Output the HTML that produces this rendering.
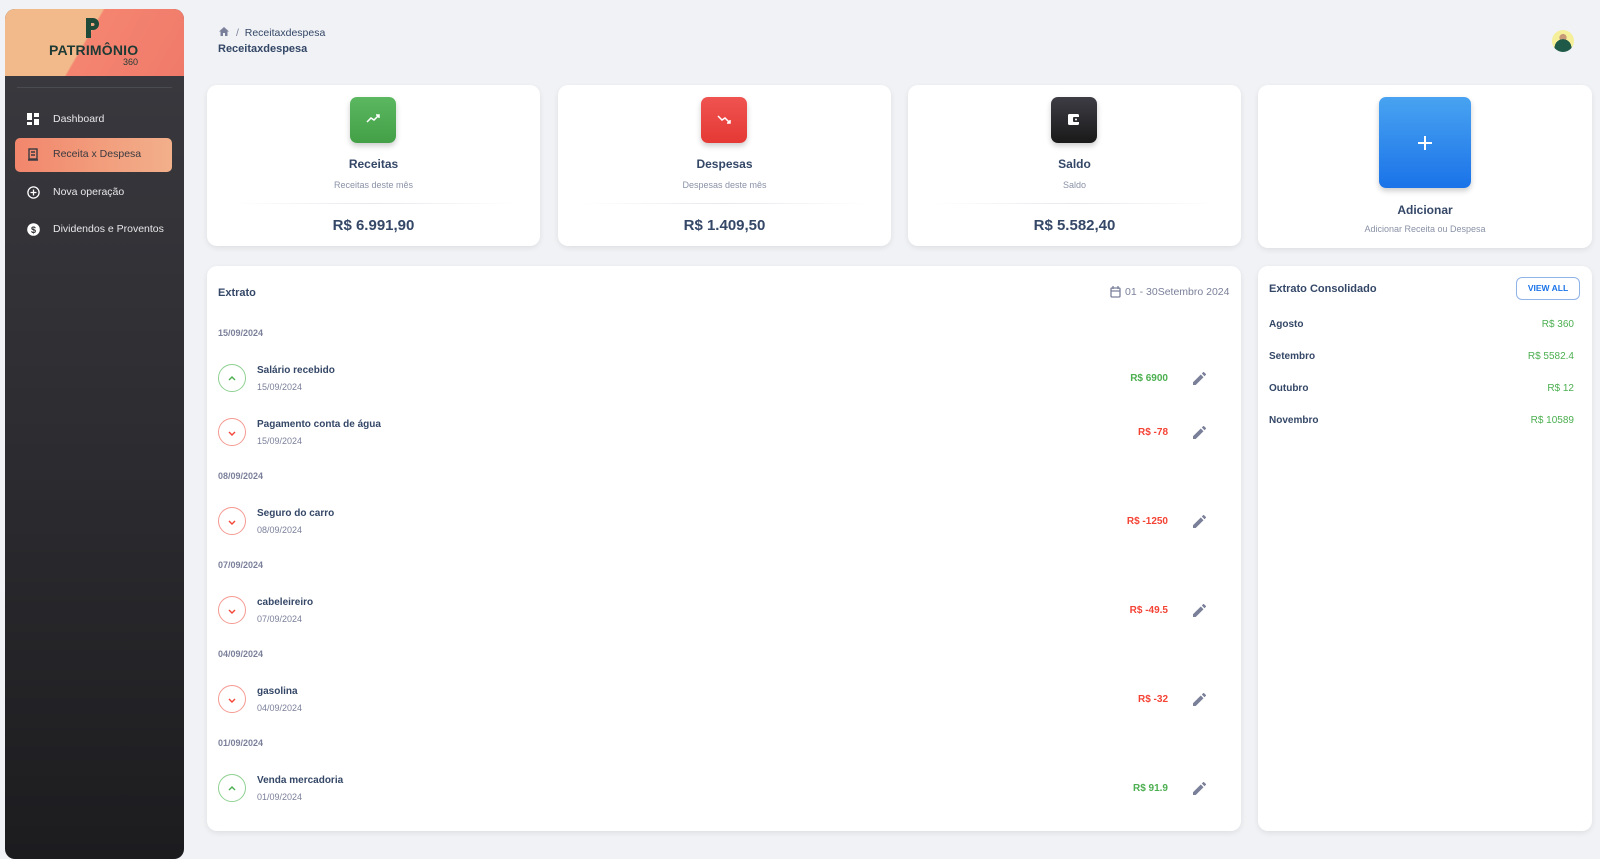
<!DOCTYPE html><html><head><meta charset="utf-8"><style>
*{box-sizing:border-box;margin:0;padding:0}
body{width:1600px;height:844px;background:#f0f2f5;font-family:"Liberation Sans",sans-serif;color:#344767;position:relative;overflow:hidden}
.a{position:absolute}
.side{left:5px;top:9px;width:179px;height:850px;border-radius:10px;background:linear-gradient(180deg,#3a3a40 0%,#2a2a2e 60%,#1c1c1f 100%);overflow:hidden}
.logo{left:0;top:0;width:179px;height:67px;background:linear-gradient(120deg,#f2b98a 0%,#f2b98a 45%,#f48470 46%,#f07a6a 100%)}
.nav{left:0;width:179px;height:34px;color:#e8e8ea;font-size:10.5px}
.nav span{position:absolute;left:48px;top:10px}
.nav svg{position:absolute;left:22px;top:10px}
.card{background:#fff;border-radius:10px;box-shadow:0 2px 6px rgba(0,0,0,.08)}
.ib{border-radius:7px;box-shadow:0 3px 6px rgba(0,0,0,.2)}
.ct{font-weight:bold;font-size:12px;text-align:center;width:100%}
.cs{font-size:9px;color:#8a92a6;text-align:center;width:100%}
.cv{font-weight:bold;font-size:15px;text-align:center;width:100%}
.hr{height:1px;background:linear-gradient(90deg,transparent,#e6e8ec,transparent)}
.dg{font-size:9px;font-weight:bold;color:#7b809a;left:11px}
.ci{width:28px;height:28px;border-radius:50%;left:11px;border:1px solid}
.rt{left:50px;font-weight:bold;font-size:10px}
.rd{left:50px;font-size:9px;color:#7b809a}
.amt{right:73px;font-weight:bold;font-size:10px;text-align:right}
.g{color:#4caf50}.r{color:#f44335}
.cg{border-color:#8fd092}.cr{border-color:#f59a92}
</style></head><body>
<div class="a side">
 <div class="a logo">
  <svg class="a" style="left:80px;top:9px" width="14" height="20" viewBox="0 0 14 20"><path d="M1 0h7a6 6 0 0 1 0 12H6v8H1z" fill="#1f4a3a"/><path d="M6 5h2a1.5 1.5 0 0 1 0 3H6z" fill="#f2a882"/></svg>
  <div class="a" style="left:44px;top:33px;font-weight:bold;font-size:14px;color:#1e3a34;letter-spacing:.2px">PATRIMÔNIO</div>
  <div class="a" style="left:118px;top:48px;font-size:9px;color:#1e3a34">360</div>
 </div>
 <div class="a" style="left:12px;top:78px;width:155px;height:1px;background:#4a4a52"></div>
 <div class="a nav" style="top:94px"><svg width="12" height="12" viewBox="0 0 12 12" fill="#fff"><rect x="0" y="0" width="5" height="7"/><rect x="7" y="0" width="5" height="4"/><rect x="0" y="9" width="5" height="3"/><rect x="7" y="6" width="5" height="6"/></svg><span>Dashboard</span></div>
 <div class="a nav" style="top:129px;left:10px;width:157px;border-radius:5px;background:linear-gradient(90deg,#f2866c,#f2b08a);color:#3a3a40"><svg style="left:12px" width="12" height="13" viewBox="0 0 12 13" fill="none" stroke="#3a3a40" stroke-width="1.4"><rect x="2" y="1" width="8" height="10"/><path d="M4 4h4M4 7h4M1 12h10"/></svg><span style="left:38px">Receita x Despesa</span></div>
 <div class="a nav" style="top:167px"><svg width="13" height="13" viewBox="0 0 13 13" fill="none" stroke="#fff" stroke-width="1.3"><circle cx="6.5" cy="6.5" r="5.6"/><path d="M6.5 3.5v6M3.5 6.5h6"/></svg><span>Nova operação</span></div>
 <div class="a nav" style="top:204px"><svg width="13" height="13" viewBox="0 0 13 13"><circle cx="6.5" cy="6.5" r="6.3" fill="#fff"/><text x="6.5" y="10" font-size="9" font-weight="bold" text-anchor="middle" fill="#2d2d32" font-family="Liberation Sans">$</text></svg><span>Dividendos e Proventos</span></div>
</div>

<svg class="a" style="left:219px;top:27px" width="10" height="9" viewBox="0 0 10 9"><path d="M5 0L0 4.5h1.5V9h2.5V6h2v3h2.5V4.5H10z" fill="#7b809a"/></svg>
<div class="a" style="left:236px;top:27px;font-size:10.5px;color:#344767"><span style="color:#7b809a">/</span>&nbsp; Receitaxdespesa</div>
<div class="a" style="left:218px;top:43px;font-size:11px;font-weight:bold">Receitaxdespesa</div>
<div class="a" style="left:1552px;top:30px;width:22px;height:22px;border-radius:50%;background:radial-gradient(circle at 50% 80%,#1f5a48 0 40%,transparent 41%),radial-gradient(circle at 50% 35%,#c89a78 0 20%,#f5ef9a 21%)"></div>

<div class="a card" style="left:207px;top:85px;width:333px;height:161px">
 <div class="a ib" style="left:143px;top:12px;width:46px;height:46px;background:linear-gradient(180deg,#5cb860,#43a047)"><svg class="a" style="left:16px;top:17px" width="14" height="10" viewBox="0 0 14 10" fill="none" stroke="#fff" stroke-width="1.5"><path d="M1 8l4-4 3 2 5-5M10 1h3v3"/></svg></div>
 <div class="a ct" style="top:72px">Receitas</div><div class="a cs" style="top:95px">Receitas deste mês</div>
 <div class="a hr" style="left:25px;right:25px;top:118px"></div><div class="a cv" style="top:132px">R$ 6.991,90</div></div>
<div class="a card" style="left:558px;top:85px;width:333px;height:161px">
 <div class="a ib" style="left:143px;top:12px;width:46px;height:46px;background:linear-gradient(180deg,#ef5350,#e53935)"><svg class="a" style="left:16px;top:17px" width="14" height="10" viewBox="0 0 14 10" fill="none" stroke="#fff" stroke-width="1.5"><path d="M1 2l4 4 3-2 5 5M10 9h3V6"/></svg></div>
 <div class="a ct" style="top:72px">Despesas</div><div class="a cs" style="top:95px">Despesas deste mês</div>
 <div class="a hr" style="left:25px;right:25px;top:118px"></div><div class="a cv" style="top:132px">R$ 1.409,50</div></div>
<div class="a card" style="left:908px;top:85px;width:333px;height:161px">
 <div class="a ib" style="left:143px;top:12px;width:46px;height:46px;background:linear-gradient(180deg,#3e3d45,#191919)"><svg class="a" style="left:16px;top:16px" width="14" height="13" viewBox="0 0 14 13"><rect x="1" y="1" width="11" height="11" rx="1.5" fill="#fff"/><rect x="6" y="4" width="7" height="5" rx="1" fill="#2a2a2e"/><circle cx="9" cy="6.5" r="1" fill="#fff"/></svg></div>
 <div class="a ct" style="top:72px">Saldo</div><div class="a cs" style="top:95px">Saldo</div>
 <div class="a hr" style="left:25px;right:25px;top:118px"></div><div class="a cv" style="top:132px">R$ 5.582,40</div></div>
<div class="a card" style="left:1258px;top:85px;width:334px;height:163px">
 <div class="a ib" style="left:121px;top:12px;width:92px;height:91px;background:linear-gradient(180deg,#49a3f1,#1a73e8)"><svg class="a" style="left:38px;top:38px" width="16" height="16" viewBox="0 0 16 16" stroke="#fff" stroke-width="2"><path d="M8 1v14M1 8h14"/></svg></div>
 <div class="a ct" style="top:118px">Adicionar</div><div class="a cs" style="top:139px">Adicionar Receita ou Despesa</div></div>

<div class="a card" style="left:207px;top:266px;width:1034px;height:565px">
 <div class="a" style="left:11px;top:21px;font-weight:bold;font-size:11px">Extrato</div>
 <svg class="a" style="left:903px;top:20px" width="11" height="12" viewBox="0 0 11 12" fill="none" stroke="#7b809a" stroke-width="1.3"><rect x="1" y="2" width="9" height="9" rx="1"/><path d="M1 5h9M3 0v3M8 0v3"/></svg>
 <div class="a" style="left:918px;top:20px;font-size:10.5px;color:#7b809a">01 - 30Setembro 2024</div>

 <div class="a dg" style="top:62px">15/09/2024</div>
 <div class="a ci cg" style="top:98px"></div>
 <div class="a rt" style="top:99px">Salário recebido</div><div class="a rd" style="top:116px">15/09/2024</div>
 <div class="a amt g" style="top:107px">R$ 6900</div>

 <div class="a ci cr" style="top:152px"></div>
 <div class="a rt" style="top:153px">Pagamento conta de água</div><div class="a rd" style="top:170px">15/09/2024</div>
 <div class="a amt r" style="top:161px">R$ -78</div>

 <div class="a dg" style="top:205px">08/09/2024</div>
 <div class="a ci cr" style="top:241px"></div>
 <div class="a rt" style="top:242px">Seguro do carro</div><div class="a rd" style="top:259px">08/09/2024</div>
 <div class="a amt r" style="top:250px">R$ -1250</div>

 <div class="a dg" style="top:294px">07/09/2024</div>
 <div class="a ci cr" style="top:330px"></div>
 <div class="a rt" style="top:331px">cabeleireiro</div><div class="a rd" style="top:348px">07/09/2024</div>
 <div class="a amt r" style="top:339px">R$ -49.5</div>

 <div class="a dg" style="top:383px">04/09/2024</div>
 <div class="a ci cr" style="top:419px"></div>
 <div class="a rt" style="top:420px">gasolina</div><div class="a rd" style="top:437px">04/09/2024</div>
 <div class="a amt r" style="top:428px">R$ -32</div>

 <div class="a dg" style="top:472px">01/09/2024</div>
 <div class="a ci cg" style="top:508px"></div>
 <div class="a rt" style="top:509px">Venda mercadoria</div><div class="a rd" style="top:526px">01/09/2024</div>
 <div class="a amt g" style="top:517px">R$ 91.9</div>
</div>

<div class="a card" style="left:1258px;top:266px;width:334px;height:565px">
 <div class="a" style="left:11px;top:17px;font-weight:bold;font-size:11px">Extrato Consolidado</div>
 <div class="a" style="left:258px;top:11px;width:64px;height:23px;border:1px solid #8fb4e8;border-radius:6px;font-size:8.5px;font-weight:bold;color:#1a73e8;text-align:center;line-height:21px">VIEW ALL</div>
 <div class="a" style="left:11px;top:53px;font-weight:bold;font-size:10px">Agosto</div><div class="a g" style="right:18px;top:53px;font-size:10px">R$ 360</div>
 <div class="a" style="left:11px;top:85px;font-weight:bold;font-size:10px">Setembro</div><div class="a g" style="right:18px;top:85px;font-size:10px">R$ 5582.4</div>
 <div class="a" style="left:11px;top:117px;font-weight:bold;font-size:10px">Outubro</div><div class="a g" style="right:18px;top:117px;font-size:10px">R$ 12</div>
 <div class="a" style="left:11px;top:149px;font-weight:bold;font-size:10px">Novembro</div><div class="a g" style="right:18px;top:149px;font-size:10px">R$ 10589</div>
</div>

<style>.pw{position:absolute;left:1193px;width:13px;height:13px}</style>
<svg class="pw" style="top:372px" viewBox="0 0 13 13"><path d="M0 10.3V13h2.7l7.8-7.8-2.7-2.7zM12.8 2.9a.7.7 0 0 0 0-1L11.1.2a.7.7 0 0 0-1 0L8.8 1.5l2.7 2.7z" fill="#7b809a"/></svg>
<svg class="pw" style="top:426px" viewBox="0 0 13 13"><path d="M0 10.3V13h2.7l7.8-7.8-2.7-2.7zM12.8 2.9a.7.7 0 0 0 0-1L11.1.2a.7.7 0 0 0-1 0L8.8 1.5l2.7 2.7z" fill="#7b809a"/></svg>
<svg class="pw" style="top:515px" viewBox="0 0 13 13"><path d="M0 10.3V13h2.7l7.8-7.8-2.7-2.7zM12.8 2.9a.7.7 0 0 0 0-1L11.1.2a.7.7 0 0 0-1 0L8.8 1.5l2.7 2.7z" fill="#7b809a"/></svg>
<svg class="pw" style="top:604px" viewBox="0 0 13 13"><path d="M0 10.3V13h2.7l7.8-7.8-2.7-2.7zM12.8 2.9a.7.7 0 0 0 0-1L11.1.2a.7.7 0 0 0-1 0L8.8 1.5l2.7 2.7z" fill="#7b809a"/></svg>
<svg class="pw" style="top:693px" viewBox="0 0 13 13"><path d="M0 10.3V13h2.7l7.8-7.8-2.7-2.7zM12.8 2.9a.7.7 0 0 0 0-1L11.1.2a.7.7 0 0 0-1 0L8.8 1.5l2.7 2.7z" fill="#7b809a"/></svg>
<svg class="pw" style="top:782px" viewBox="0 0 13 13"><path d="M0 10.3V13h2.7l7.8-7.8-2.7-2.7zM12.8 2.9a.7.7 0 0 0 0-1L11.1.2a.7.7 0 0 0-1 0L8.8 1.5l2.7 2.7z" fill="#7b809a"/></svg>

<style>.chev{position:absolute;left:228px;width:8px;height:5px}</style>
<svg class="chev" style="top:376px" viewBox="0 0 8 5"><path d="M1 4l3-3 3 3" stroke="#4caf50" stroke-width="1.4" fill="none"/></svg>
<svg class="chev" style="top:431px" viewBox="0 0 8 5"><path d="M1 1l3 3 3-3" stroke="#f44335" stroke-width="1.4" fill="none"/></svg>
<svg class="chev" style="top:520px" viewBox="0 0 8 5"><path d="M1 1l3 3 3-3" stroke="#f44335" stroke-width="1.4" fill="none"/></svg>
<svg class="chev" style="top:609px" viewBox="0 0 8 5"><path d="M1 1l3 3 3-3" stroke="#f44335" stroke-width="1.4" fill="none"/></svg>
<svg class="chev" style="top:698px" viewBox="0 0 8 5"><path d="M1 1l3 3 3-3" stroke="#f44335" stroke-width="1.4" fill="none"/></svg>
<svg class="chev" style="top:786px" viewBox="0 0 8 5"><path d="M1 4l3-3 3 3" stroke="#4caf50" stroke-width="1.4" fill="none"/></svg>
</body></html>
